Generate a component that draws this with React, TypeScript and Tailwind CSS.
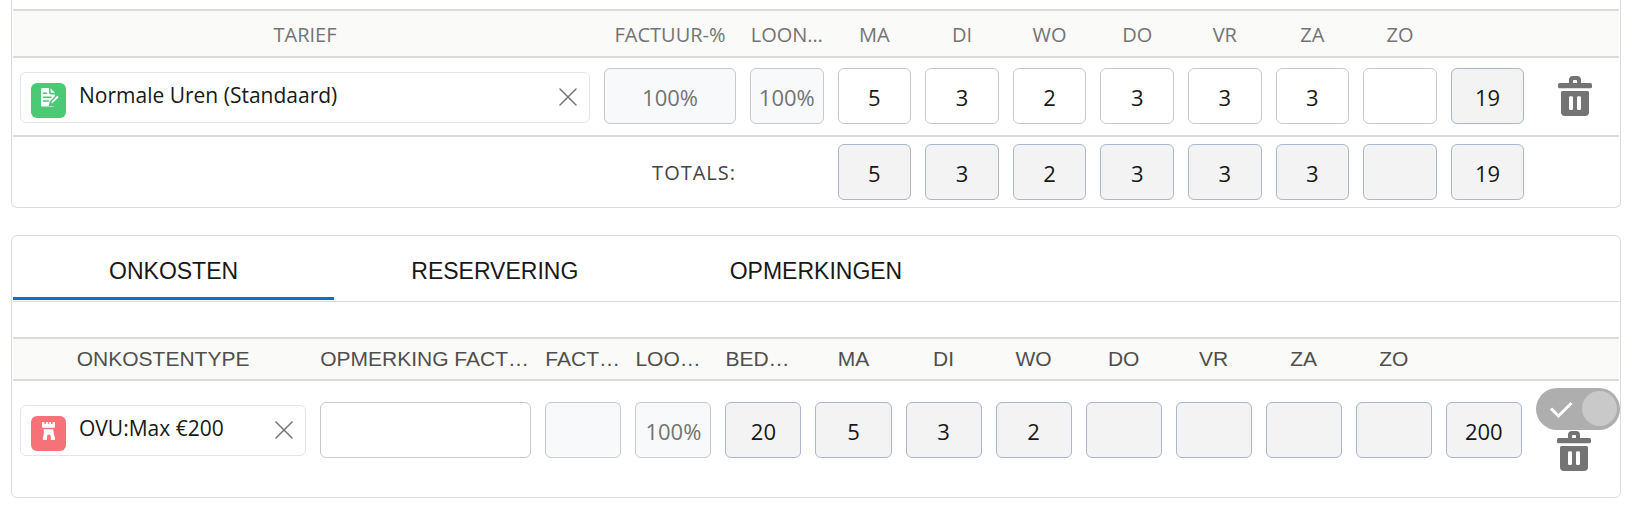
import { useState } from 'react'
import clsx from 'clsx'

const DAYS = ['MA', 'DI', 'WO', 'DO', 'VR', 'ZA', 'ZO']

type FieldVariant = 'input' | 'percent' | 'readonly'

interface FieldProps {
  label: string
  value: string
  variant?: FieldVariant
}

function Field({ label, value, variant = 'input' }: FieldProps) {
  return (
    <input
      type="text"
      aria-label={label}
      defaultValue={value}
      readOnly={variant !== 'input'}
      className={clsx(
        'block h-14 w-full rounded-md border pt-px text-center text-[22px] outline-none',
        variant === 'input' && 'border-[#c9c9c9] bg-white text-[#181818]',
        variant === 'percent' && 'border-[#c9c9c9] bg-[#f8f9fb] text-[#747474]',
        variant === 'readonly' && 'border-[#a8b7c9] bg-[#f3f3f3] text-[#181818]'
      )}
    />
  )
}

function TimesheetIcon() {
  return (
    <svg viewBox="0 0 35 35" className="size-[35px]" aria-hidden="true">
      <rect width="35" height="35" rx="6" fill="#4bca76" />
      <path d="M11.5 5H18v4.5c0 1.2.8 2 2 2h4v1.6l-5.2 5.2-1.2 4.7h5.6a1.8 1.8 0 0 1-1.6.6H11.5A1.5 1.5 0 0 1 10 21.500V6.500A1.500 1.500 0 0 1 11.500 5z" fill="#fff" />
      <path d="M19.600 5.200 24 9.800h-3.400a1 1 0 0 1-1-1z" fill="#fff" />
      <path d="M12.400 10.300h3.200M12.400 14.200h7.600M12.400 18h5" stroke="#4bca76" strokeWidth="1.500" strokeLinecap="round" />
      <path d="m19.800 20.900 1-3 5.400-5.400 1.700 1.700-5.400 5.400z" fill="#fff" stroke="#4bca76" strokeWidth="0.600" />
    </svg>
  )
}

function ExpenseIcon() {
  return (
    <svg viewBox="0 0 35 35" className="size-[35px]" aria-hidden="true">
      <rect width="35" height="35" rx="6" fill="#f67278" />
      <path
        d="M11 6.800c0-.5.300-.8.800-.8h.900c.5 0 .8.300.8.800V8h1.400V6.800c0-.5.300-.8.800-.8h3.600c.5 0 .8.300.8.800V8h1.400V6.800c0-.5.300-.8.800-.8h.900c.5 0 .8.300.8.800v4c0 .6-.4 1-1 1H12c-.6 0-1-.4-1-1z"
        fill="#fff"
      />
      <path d="M17.500 5.500v2.300" stroke="#f67278" strokeWidth="1.400" />
      <path d="M12.800 13.200h9.400l.7 5 1.200 4.400c.2.800-.2 1.400-.9 1.400h-3.400v-3.600a1.900 1.900 0 0 0-3.800 0V24h-3.300c-.7 0-1.100-.6-.9-1.400l1-4.400z" fill="#fff" />
    </svg>
  )
}

function CloseIcon() {
  return (
    <svg viewBox="0 0 18 18" className="size-[18px]" fill="none" stroke="#747474" strokeWidth="1.500" strokeLinecap="round" aria-hidden="true">
      <path d="M1 1l16 16M17 1L1 17" />
    </svg>
  )
}

function TrashIcon() {
  return (
    <svg viewBox="0 0 34 40" className="h-10 w-[34px]" fill="#747474" aria-hidden="true">
      <path d="M11 7.500V4a4 4 0 0 1 4-4h4a4 4 0 0 1 4 4v3.500h-4V5a1 1 0 0 0-1-1h-2a1 1 0 0 0-1 1v2.500z" />
      <rect y="7" width="34" height="5.300" rx="1.600" />
      <path
        fillRule="evenodd"
        d="M4.500 15h25a1.500 1.500 0 0 1 1.500 1.500V36a4 4 0 0 1-4 4H7a4 4 0 0 1-4-4V16.500A1.500 1.500 0 0 1 4.500 15zM12.400 20.300a1.400 1.400 0 0 0-1.400 1.400v11a1.400 1.400 0 0 0 1.400 1.400h1.200a1.400 1.400 0 0 0 1.400-1.400v-11a1.400 1.400 0 0 0-1.400-1.400zM20.400 20.300a1.400 1.400 0 0 0-1.400 1.400v11a1.400 1.400 0 0 0 1.400 1.400h1.200a1.400 1.400 0 0 0 1.400-1.400v-11a1.400 1.400 0 0 0-1.400-1.400z"
      />
    </svg>
  )
}

function LookupPill({ icon, text }: { icon: React.ReactNode; text: string }) {
  return (
    <div className="flex h-[51px] items-start rounded-md border border-[#e5e5e5] bg-white pr-3 pl-[10px]">
      <span className="mt-[10px]">{icon}</span>
      <span className="mt-[6px] ml-[13px] flex-1 truncate text-[21px] leading-8 text-[#181818]">{text}</span>
      <button type="button" aria-label={`${text} verwijderen`} className="mt-[15px] cursor-pointer">
        <CloseIcon />
      </button>
    </div>
  )
}

function DeleteButton() {
  return (
    <button type="button" aria-label="Rij verwijderen" className="mx-auto block cursor-pointer">
      <TrashIcon />
    </button>
  )
}

function ApprovedToggle() {
  const [checked, setChecked] = useState(true)
  return (
    <label className="relative block h-[42px] w-[84px] cursor-pointer">
      <input
        type="checkbox"
        aria-label="Goedgekeurd"
        checked={checked}
        onChange={(e) => setChecked(e.target.checked)}
        className="block h-full w-full appearance-none rounded-full bg-[#aeaeae]"
      />
      {checked && (
        <svg viewBox="0 0 24 18" className="absolute top-[13px] left-[13px] h-[18px] w-6" fill="none" stroke="#fff" strokeWidth="3" aria-hidden="true">
          <path d="M2 7.500l7.500 7.500L22.500 2" />
        </svg>
      )}
      <span
        className={clsx('absolute top-[3px] size-[35px] rounded-full bg-[#c9c9c9]', checked ? 'right-[3px]' : 'left-[3px]')}
      />
    </label>
  )
}

function HoursTable() {
  const hours = ['5', '3', '2', '3', '3', '3', '']
  const th = 'h-[49px] border-y-2 border-[#dddbda] bg-[#fafaf9] px-[7px] pt-[2px] text-center text-[20px] font-normal text-[#747474]'
  const td = 'h-[79px] border-b-2 border-[#dddbda] px-[7px] align-top'

  return (
    <table className="w-full table-fixed border-separate border-spacing-0">
      <colgroup>
        <col className="w-4/11" />
        <col className="w-1/11" />
        <col span={10} className="w-3/55" />
      </colgroup>
      <thead>
        <tr>
          <th className={th}>TARIEF</th>
          <th className={th}>FACTUUR-%</th>
          <th className={th} title="LOON-%">LOON…</th>
          {DAYS.map((day) => (
            <th key={day} className={th}>{day}</th>
          ))}
          <th className={th} />
          <th className={th} />
        </tr>
      </thead>
      <tbody>
        <tr>
          <td className={clsx(td, 'pt-[14px]')}>
            <LookupPill icon={<TimesheetIcon />} text="Normale Uren (Standaard)" />
          </td>
          <td className={clsx(td, 'pt-[10px]')}><Field label="Factuur-%" value="100%" variant="percent" /></td>
          <td className={clsx(td, 'pt-[10px]')}><Field label="Loon-%" value="100%" variant="percent" /></td>
          {DAYS.map((day, i) => (
            <td key={day} className={clsx(td, 'pt-[10px]')}><Field label={`Uren ${day}`} value={hours[i]} /></td>
          ))}
          <td className={clsx(td, 'pt-[10px]')}><Field label="Uren totaal" value="19" variant="readonly" /></td>
          <td className={clsx(td, 'pt-[18px]')}><DeleteButton /></td>
        </tr>
      </tbody>
      <tfoot>
        <tr>
          <td />
          <th scope="row" className="px-[7px] pt-[2px] text-right text-[20px] font-normal tracking-wider text-[#444444]">TOTALS:</th>
          <td />
          {DAYS.map((day, i) => (
            <td key={day} className="p-[7px]"><Field label={`Totaal ${day}`} value={hours[i]} variant="readonly" /></td>
          ))}
          <td className="p-[7px]"><Field label="Totaal" value="19" variant="readonly" /></td>
          <td />
        </tr>
      </tfoot>
    </table>
  )
}

function ExpensesTable() {
  const amounts = ['5', '3', '2', '', '', '', '']
  const th = 'h-11 overflow-hidden border-y-2 border-[#dddbda] bg-[#fafaf9] px-[7px] text-[21px] font-normal whitespace-nowrap text-[#514f4d]'
  const td = 'h-[116px] px-[7px] align-top'

  return (
    <table className="w-full table-fixed border-separate border-spacing-0">
      <colgroup>
        <col className="w-20/107" />
        <col className="w-15/107" />
        <col span={12} className="w-6/107" />
      </colgroup>
      <thead className="font-['Liberation_Sans',Arial,sans-serif]">
        <tr>
          <th className={clsx(th, 'text-center')}>ONKOSTENTYPE</th>
          <th className={clsx(th, 'text-left')} title="OPMERKING FACTUUR">OPMERKING FACT…</th>
          <th className={clsx(th, 'text-left')} title="FACTUUR-%">FACT…</th>
          <th className={clsx(th, 'text-left')} title="LOON-%">LOO…</th>
          <th className={clsx(th, 'text-left')} title="BEDRAG">BED…</th>
          {DAYS.map((day) => (
            <th key={day} className={clsx(th, 'text-center')}>{day}</th>
          ))}
          <th className={th} />
          <th className={th} />
        </tr>
      </thead>
      <tbody>
        <tr>
          <td className={clsx(td, 'pt-6')}>
            <LookupPill icon={<ExpenseIcon />} text="OVU:Max €200" />
          </td>
          <td className={clsx(td, 'pt-[21px]')}><Field label="Opmerking factuur" value="" /></td>
          <td className={clsx(td, 'pt-[21px]')}><Field label="Factuur-%" value="" variant="percent" /></td>
          <td className={clsx(td, 'pt-[21px]')}><Field label="Loon-%" value="100%" variant="percent" /></td>
          <td className={clsx(td, 'pt-[21px]')}><Field label="Bedrag" value="20" variant="readonly" /></td>
          {DAYS.map((day, i) => (
            <td key={day} className={clsx(td, 'pt-[21px]')}><Field label={`Onkosten ${day}`} value={amounts[i]} variant="readonly" /></td>
          ))}
          <td className={clsx(td, 'pt-[21px]')}><Field label="Onkosten totaal" value="200" variant="readonly" /></td>
          <td className="pt-[7px] pl-[7px] align-top">
            <ApprovedToggle />
            <div className="mt-px pr-[7px]">
              <DeleteButton />
            </div>
          </td>
        </tr>
      </tbody>
    </table>
  )
}

const TABS = ['ONKOSTEN', 'RESERVERING', 'OPMERKINGEN']

export default function App() {
  const [activeTab, setActiveTab] = useState('ONKOSTEN')

  return (
    <main className="bg-white pr-3 pl-[11px] font-['Open_Sans','Noto_Sans',sans-serif]">
      {/* Hours */}
      <section className="rounded-b-md border-x border-b border-[#dddbda] px-px pt-[9px]">
        <HoursTable />
      </section>

      {/* Expenses, reservations and remarks */}
      <section className="mt-[27px] rounded-md border border-[#dddbda] px-px">
        <div role="tablist" className="flex h-[66px] border-b border-[#dddbda] pb-px font-['Liberation_Sans',Arial,sans-serif]">
          {TABS.map((tab) => (
            <button
              key={tab}
              type="button"
              role="tab"
              aria-selected={tab === activeTab}
              onClick={() => setActiveTab(tab)}
              className={clsx(
                'w-1/5 cursor-pointer border-b-3 pt-[10px] text-[23px] text-[#181818]',
                tab === activeTab ? 'border-[#0070d2]' : 'border-transparent'
              )}
            >
              {tab}
            </button>
          ))}
        </div>
        <div role="tabpanel" className="pt-[35px]">
          <ExpensesTable />
        </div>
      </section>
    </main>
  )
}
